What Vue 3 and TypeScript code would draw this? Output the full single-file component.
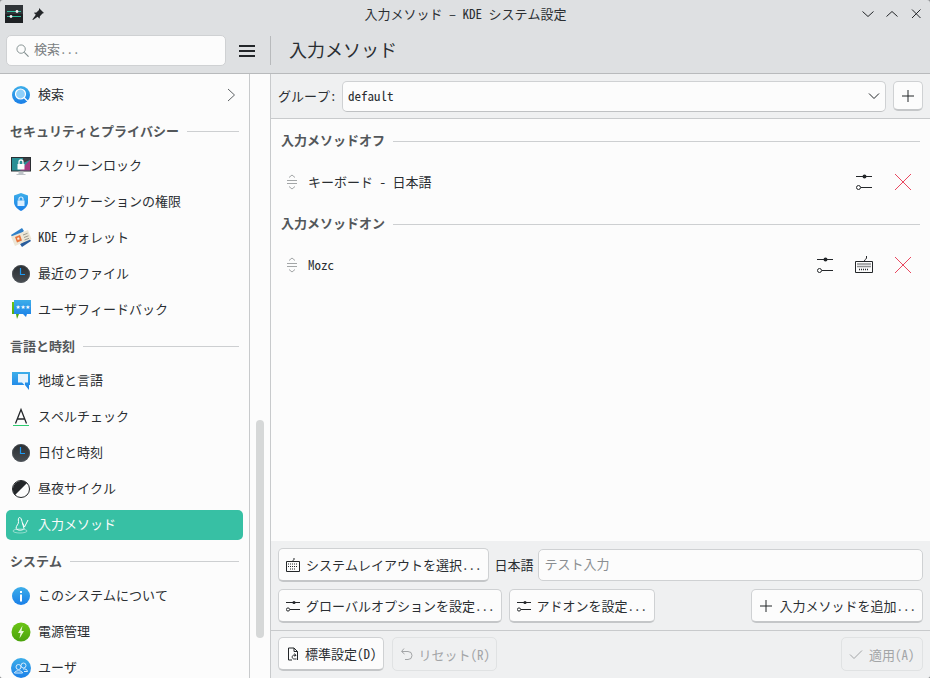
<script setup lang="ts">
interface Item {
  kind: "item" | "header";
  label: string;
  icon?: string;
  active?: boolean;
  arrow?: boolean;
}

const sidebar: Item[] = [
  { kind: "item", label: "検索", icon: "search", arrow: true },
  { kind: "header", label: "セキュリティとプライバシー" },
  { kind: "item", label: "スクリーンロック", icon: "lock" },
  { kind: "item", label: "アプリケーションの権限", icon: "shield" },
  { kind: "item", label: "KDE ウォレット", icon: "wallet" },
  { kind: "item", label: "最近のファイル", icon: "clock" },
  { kind: "item", label: "ユーザフィードバック", icon: "feedback" },
  { kind: "header", label: "言語と時刻" },
  { kind: "item", label: "地域と言語", icon: "region" },
  { kind: "item", label: "スペルチェック", icon: "spell" },
  { kind: "item", label: "日付と時刻", icon: "clock" },
  { kind: "item", label: "昼夜サイクル", icon: "night" },
  { kind: "item", label: "入力メソッド", icon: "tux", active: true },
  { kind: "header", label: "システム" },
  { kind: "item", label: "このシステムについて", icon: "info" },
  { kind: "item", label: "電源管理", icon: "power" },
  { kind: "item", label: "ユーザ", icon: "users" },
];
</script>

<template>
  <div class="window">
    <svg class="defs" width="0" height="0">
      <defs>
        <linearGradient id="blue" x1="0" y1="0" x2="0" y2="1">
          <stop offset="0" stop-color="#3daee9" />
          <stop offset="1" stop-color="#1a7fe8" />
        </linearGradient>
        <linearGradient id="green" x1="0" y1="0" x2="0" y2="1">
          <stop offset="0" stop-color="#6cc516" />
          <stop offset="1" stop-color="#4aa20c" />
        </linearGradient>
        <linearGradient id="dark" x1="0" y1="0" x2="0" y2="1">
          <stop offset="0" stop-color="#2a2e32" />
          <stop offset="1" stop-color="#484d52" />
        </linearGradient>
      </defs>
    </svg>
    <header class="titlebar">
      <div class="tb-left">
        <svg class="app-icon" width="18" height="18" viewBox="0 0 18 18">
          <rect width="18" height="18" fill="#2f3438" />
          <rect y="9" width="18" height="9" fill="#1d2023" />
          <path d="M2 6.500h14M2 11.500h14" stroke="#2fbf9f" stroke-width="1" />
          <circle cx="12" cy="6.500" r="1.400" fill="#eff0f1" />
          <circle cx="6" cy="11.500" r="1.400" fill="#eff0f1" />
        </svg>
        <svg width="14" height="14" viewBox="0 0 14 14">
          <path d="M8 1l5 5-1.500.6-2.600 2.600-.3 2.600-2-2L2 13l-.6-.6 3.400-4.600-2-2 2.600-.3 2.600-2.600z" fill="#232629" />
        </svg>
      </div>
      <div class="wintitle">入力メソッド – KDE システム設定</div>
      <div class="tb-right">
        <svg width="12" height="12" viewBox="0 0 12 12"><path d="M.500 3.500L6 8.500l5.500-5" class="win-stroke" /></svg>
        <svg width="12" height="12" viewBox="0 0 12 12"><path d="M.500 8.500L6 3.500l5.500 5" class="win-stroke" /></svg>
        <svg width="12" height="12" viewBox="0 0 12 12"><path d="M2 1.500l8.500 8.500M10.500 1.500L2 10" class="win-stroke" /></svg>
      </div>
    </header>

    <div class="toolbar">
      <div class="search-box">
        <svg width="13" height="13" viewBox="0 0 14 14">
          <circle cx="5.500" cy="5.500" r="4.500" fill="none" stroke="#7f8c8d" />
          <path d="M9 9l4.500 4.500" stroke="#7f8c8d" stroke-width="1.200" />
        </svg>
        <span class="lift2">検索...</span>
      </div>
      <svg class="burger" width="16" height="12" viewBox="0 0 16 12">
        <path d="M0 1h16M0 6h16M0 11h16" stroke="#232629" stroke-width="2" />
      </svg>
      <div class="tool-sep"></div>
      <div class="page-title lift2">入力メソッド</div>
    </div>

    <div class="main">
      <aside class="sidebar">
        <div class="side-list">
          <template v-for="it in sidebar" :key="it.label">
            <div v-if="it.kind === 'header'" class="side-header">
              <span>{{ it.label }}</span>
              <i class="rule"></i>
            </div>
            <div v-else class="side-item" :class="{ active: it.active }">
              <svg class="side-icon" width="22" height="22" viewBox="0 0 22 22">
                <template v-if="it.icon === 'search'">
                  <circle cx="11" cy="11" r="9" fill="url(#blue)" />
                  <circle cx="10.500" cy="10" r="5" fill="#8fd0fa" stroke="#fff" stroke-width="1.200" />
                  <path d="M14 13.500l4 4" stroke="#fff" stroke-width="1.300" />
                </template>
                <template v-else-if="it.icon === 'lock'">
                  <rect x="1" y="2" width="20" height="14.500" fill="#2a2e32" />
                  <path d="M2 3h18v12.500H2z" fill="#2a8f95" />
                  <path d="M20 5v10.500H10z" fill="#a9397f" />
                  <path d="M13 3h7v2l-7 3z" fill="#3a3f44" />
                  <rect x="8.500" y="16.500" width="5" height="2.500" fill="#bdc3c7" />
                  <rect x="6.500" y="19" width="9" height="1" fill="#bdc3c7" />
                  <rect x="7.500" y="9" width="7" height="5.500" fill="#fcfcfc" />
                  <path d="M9 9V7a2 2 0 0 1 4 0v2" fill="none" stroke="#fcfcfc" stroke-width="1.300" />
                </template>
                <template v-else-if="it.icon === 'shield'">
                  <path d="M11 2l7 2.500V11c0 4-3 7-7 9-4-2-7-5-7-9V4.500z" fill="url(#blue)" />
                  <rect x="7.500" y="9.500" width="7" height="5.500" fill="#dcefff" />
                  <path d="M9 9.500V8a2 2 0 0 1 4 0v1.500" fill="none" stroke="#dcefff" stroke-width="1.200" />
                </template>
                <template v-else-if="it.icon === 'wallet'">
                  <path d="M1 8l11-7 2 3-10 9z" fill="#2f80c9" />
                  <path d="M12 20l9-6-2-3-9 6z" fill="#2a5d9c" />
                  <path d="M1 9.500l17-6.500 3.500 9L5 19z" fill="#ece6d6" />
                  <path d="M5 10l5-2 2 5.500-5 2z" fill="#e8743b" />
                  <path d="M7 11l2-.7.700 2-2 .7z" fill="#f7e9d8" />
                  <path d="M13 8l4.500-1.700M14 10.500l4.500-1.700M14.500 13l4.500-1.700" stroke="#9a9a8e" />
                </template>
                <template v-else-if="it.icon === 'clock'">
                  <circle cx="11" cy="11" r="9" fill="url(#dark)" />
                  <circle cx="11" cy="11" r="8.500" fill="none" stroke="#5a6065" stroke-opacity=".6" />
                  <path d="M10.500 5v6.500H15" fill="none" stroke="#1d99f3" stroke-width="1.200" />
                </template>
                <template v-else-if="it.icon === 'feedback'">
                  <path d="M2 3h4v12h3l-2 5-1-5H2z" fill="url(#green)" />
                  <path d="M4 1h17v14h-4l-1 3-3-3H4z" fill="url(#blue)" />
                  <text x="5.500" y="10" class="stars">★★★</text>
                </template>
                <template v-else-if="it.icon === 'region'">
                  <path d="M2 2h18v13h-1v5l-4-5H2z" fill="url(#blue)" />
                  <path d="M8 4h10v8.500h-3v3l-3-3H8z" fill="#e6f3fd" />
                </template>
                <template v-else-if="it.icon === 'spell'">
                  <path d="M5.500 17.500L11 3.500l5.500 14M7.300 13h7.400" fill="none" stroke="#232629" stroke-width="1.300" />
                  <path d="M3 19.500h16" stroke="#2ecc71" stroke-width="1" />
                </template>
                <template v-else-if="it.icon === 'night'">
                  <circle cx="11" cy="11" r="8.500" fill="#fcfcfc" stroke="#232629" />
                  <path d="M5 17A8.500 8.500 0 0 1 17 5z" fill="#232629" />
                </template>
                <template v-else-if="it.icon === 'tux'">
                  <path d="M9.500 3.500c1.500 0 2 2 2.500 4l2 7c-1 2-6 2.500-8 0 0-3 3-4.500 2.500-7-.5-2 0-4 1-4z" fill="none" stroke="#fff" />
                  <path d="M12.500 9l2 4 3.500-7" fill="none" stroke="#fff" />
                  <ellipse cx="10" cy="17" rx="7" ry="2" fill="none" stroke="#fff" stroke-opacity=".45" />
                </template>
                <template v-else-if="it.icon === 'info'">
                  <circle cx="11" cy="11" r="9" fill="url(#blue)" />
                  <rect x="10" y="9.500" width="2" height="7" fill="#fff" />
                  <rect x="10" y="6" width="2" height="2" fill="#fff" />
                </template>
                <template v-else-if="it.icon === 'power'">
                  <circle cx="11" cy="11" r="9.500" fill="url(#green)" />
                  <path d="M12.500 4.500L8 12h2.500l-1 5.500L14 10h-2.500z" fill="#e8f7da" />
                </template>
                <template v-else-if="it.icon === 'users'">
                  <circle cx="11" cy="11" r="10" fill="url(#blue)" />
                  <circle cx="8.500" cy="10" r="2.500" fill="none" stroke="#d6ecfd" />
                  <circle cx="13.500" cy="8.500" r="2.500" fill="none" stroke="#d6ecfd" />
                  <path d="M4.500 16c0-3 8-3 8 0zM13 12c2-.5 4.500.5 4.500 2.500H14" fill="none" stroke="#d6ecfd" />
                </template>
              </svg>
              <span class="side-label">{{ it.label }}</span>
              <svg v-if="it.arrow" class="side-arrow" width="9" height="14" viewBox="0 0 9 14">
                <path d="M1 1l6.500 6L1 13" fill="none" stroke="#5e6265" />
              </svg>
            </div>
          </template>
        </div>
      </aside>

      <div class="scroll-col"><div class="thumb"></div></div>

      <section class="content">
        <div class="group-bar">
          <span class="group-label lift1">グループ:</span>
          <div class="combo">
            <span class="lift1">default</span>
            <svg width="12" height="8" viewBox="0 0 12 8"><path d="M1 1.500l5 5 5-5" fill="none" stroke="#232629" /></svg>
          </div>
          <button class="btn square">
            <svg width="12" height="12" viewBox="0 0 12 12"><path d="M6 0v12M0 6h12" stroke="#232629" /></svg>
          </button>
        </div>

        <div class="im-list">
          <div class="im-header"><span class="lift2">入力メソッドオフ</span><i class="rule"></i></div>
          <div class="im-row">
            <svg class="grip" width="12" height="16" viewBox="0 0 12 16"><path d="M3 3.500L6 1l3 2.500M1 6.500h10M1 9.500h10M3 12.500L6 15l3-2.500" fill="none" stroke="#8c8f91" stroke-width=".8" /></svg>
            <span class="im-name">キーボード - 日本語</span>
            <svg class="row-ic sliders" width="16" height="16" viewBox="0 0 16 16"><path d="M0 2.500h16M5 13.500h11" stroke="#232629" /><circle cx="8.500" cy="2.500" r="2" fill="#232629" /><circle cx="2.500" cy="13.500" r="2" fill="#fff" stroke="#232629" /></svg>
            <svg class="row-ic" width="18" height="18" viewBox="0 0 18 18"><path d="M1 1l16 16M17 1L1 17" stroke="#e9475f" /></svg>
          </div>
          <div class="im-header"><span class="lift2">入力メソッドオン</span><i class="rule"></i></div>
          <div class="im-row">
            <svg class="grip" width="12" height="16" viewBox="0 0 12 16"><path d="M3 3.500L6 1l3 2.500M1 6.500h10M1 9.500h10M3 12.500L6 15l3-2.500" fill="none" stroke="#8c8f91" stroke-width=".8" /></svg>
            <span class="im-name">Mozc</span>
            <svg class="row-ic sliders" width="16" height="16" viewBox="0 0 16 16"><path d="M0 2.500h16M5 13.500h11" stroke="#232629" /><circle cx="8.500" cy="2.500" r="2" fill="#232629" /><circle cx="2.500" cy="13.500" r="2" fill="#fff" stroke="#232629" /></svg>
            <svg class="row-ic" width="18" height="18" viewBox="0 0 18 18">
              <path d="M11.500 0v2c0 1.500-2 1-2 3M.5 5.500h17v11H.5z" fill="none" stroke="#232629" />
              <path d="M2.500 8h13M2.500 10.500h13M4 13.500h10" stroke="#232629" stroke-dasharray="1 1" stroke-width="1.400" />
            </svg>
            <svg class="row-ic" width="18" height="18" viewBox="0 0 18 18"><path d="M1 1l16 16M17 1L1 17" stroke="#e9475f" /></svg>
          </div>
        </div>

        <div class="lower">
          <div class="lower-row">
            <button class="btn">
              <svg width="14" height="14" viewBox="0 0 14 14">
                <path d="M8 0v1.500c0 1-1.500 .5-1.500 2M.5 3.500h13v10H.5z" fill="none" stroke="#232629" />
                <path d="M2 6h10M2 8.500h10M4 11h6" stroke="#232629" stroke-dasharray="1 1" stroke-width="1.200" />
              </svg>
              システムレイアウトを選択...
            </button>
            <span class="lang lift1">日本語</span>
            <div class="test-input"><span class="lift2">テスト入力</span></div>
          </div>
          <div class="lower-row">
            <button class="btn">
              <svg width="14" height="14" viewBox="0 0 14 14"><path d="M0 3.500h14M4 10.500h10" stroke="#232629" /><circle cx="8" cy="3.500" r="1.600" fill="#232629" /><circle cx="2" cy="10.500" r="1.600" fill="#fcfcfc" stroke="#232629" /></svg>
              グローバルオプションを設定...
            </button>
            <button class="btn addon">
              <svg width="14" height="14" viewBox="0 0 14 14"><path d="M0 3.500h14M4 10.500h10" stroke="#232629" /><circle cx="8" cy="3.500" r="1.600" fill="#232629" /><circle cx="2" cy="10.500" r="1.600" fill="#fcfcfc" stroke="#232629" /></svg>
              アドオンを設定...
            </button>
            <button class="btn push">
              <svg width="14" height="14" viewBox="-1 -1 14 14"><path d="M6 0v12M0 6h12" stroke="#232629" /></svg>
              入力メソッドを追加...
            </button>
          </div>
        </div>

        <div class="footer">
          <button class="btn tight">
            <svg width="14" height="14" viewBox="0 0 14 14"><path d="M6 13H2.500V1H8l3.500 3.500V13M8 1v3.500h3.500M10.500 12L8.500 12a2 2 0 1 1 1-3.500M8.500 6.500l1.500 2-2 .5" fill="none" stroke="#232629" /></svg>
            標準設定(D)
          </button>
          <button class="btn tight disabled">
            <svg width="14" height="14" viewBox="0 0 14 14"><path d="M4 1.500L1.500 4.500l3 2.500M2 4.500h6a4 4 0 0 1 0 8H5" fill="none" stroke="#a3a5a7" /></svg>
            リセット(R)
          </button>
          <button class="btn disabled push apply">
            <svg width="14" height="14" viewBox="0 0 14 14"><path d="M1 7.500l4 4L13 3.500" fill="none" stroke="#a3a5a7" /></svg>
            適用(A)
          </button>
        </div>
      </section>
    </div>
  </div>
</template>

<style>
html, body { margin: 0; padding: 0; background: #8a8c8e; }
</style>

<style scoped>
.window {
  width: 930px;
  height: 678px;
  display: flex;
  flex-direction: column;
  overflow: hidden;
  border-radius: 3px;
  background: #dee0e2;
  color: #2a2e32;
  font-family: "Noto Sans Mono CJK JP", "DejaVu Sans Mono", "Noto Sans CJK JP", monospace;
  font-size: 13px;
}
.defs { flex: none; }
.lift1 { padding-bottom: 2px; }
.lift2 { padding-bottom: 4px; }
.titlebar {
  height: 28px;
  flex: none;
  display: flex;
  align-items: center;
  padding: 0 8px 0 5px;
}
.tb-left { display: flex; align-items: center; gap: 8px; }
.tb-right { margin-left: auto; display: flex; gap: 12px; }
.win-stroke { fill: none; stroke: #232629; stroke-width: 1; }
.wintitle { flex: 1; text-align: center; padding: 0 0 2px 24px; }
.toolbar {
  height: 45px;
  flex: none;
  display: flex;
  align-items: center;
  padding: 0 0 0 6px;
  border-bottom: 1px solid #b8babc;
}
.search-box {
  width: 220px;
  height: 31px;
  box-sizing: border-box;
  background: #fcfcfc;
  border: 1px solid #cfd1d3;
  border-radius: 5px;
  display: flex;
  align-items: center;
  gap: 5px;
  padding-left: 9px;
  color: #7a7e81;
}
.burger { margin-left: 13px; }
.tool-sep { width: 1px; height: 29px; background: #b8babc; margin-left: 15px; }
.page-title { font-size: 18px; margin-left: 18px; }
.main { flex: 1; display: flex; min-height: 0; }
.sidebar {
  width: 249px;
  flex: none;
  background: #fcfcfc;
  border-right: 1px solid #c8cacc;
  overflow: hidden;
}
.side-list { display: flex; flex-direction: column; padding-top: 3px; }
.side-item {
  height: 30px;
  margin: 3px 6px;
  display: flex;
  align-items: center;
  gap: 6px;
  padding: 0 6px 0 4px;
  border-radius: 5px;
  flex: none;
}
.side-item.active { background: #37c0a4; color: #fcfcfc; }
.side-icon { flex: none; }
.side-label { padding-bottom: 4px; }
.side-arrow { margin-left: auto; margin-right: 1px; }
.side-header {
  height: 35px;
  flex: none;
  box-sizing: border-box;
  padding: 0 10px 1px 10px;
  display: flex;
  align-items: center;
  gap: 8px;
  font-weight: 700;
  color: #53575a;
}
.side-header .rule { margin-top: 3px; }
.rule { flex: 1; height: 1px; background: #cdcfd1; }
.stars { font-size: 5.500px; fill: #fff; font-family: "DejaVu Sans", sans-serif; }
.scroll-col {
  width: 20px;
  flex: none;
  background: #fcfcfc;
  border-right: 1px solid #c8cacc;
  position: relative;
}
.thumb {
  position: absolute;
  left: 6px;
  top: 346px;
  width: 8px;
  height: 218px;
  border-radius: 4px;
  background: #d6d8d8;
}
.content {
  flex: 1;
  min-width: 0;
  display: flex;
  flex-direction: column;
  background: #eff0f1;
}
.group-bar {
  height: 45px;
  flex: none;
  box-sizing: border-box;
  display: flex;
  align-items: center;
  padding: 0 7px;
  border-bottom: 1px solid #c8cacc;
}
.group-label { width: 64px; flex: none; }
.combo {
  flex: 1;
  height: 31px;
  box-sizing: border-box;
  background: #fcfcfc;
  border: 1px solid #cfd1d3;
  border-bottom-color: #bfc1c3;
  border-radius: 5px;
  display: flex;
  align-items: center;
  justify-content: space-between;
  padding: 0 5px 0 5px;
}
.btn {
  height: 34px;
  box-sizing: border-box;
  font: inherit;
  color: inherit;
  background: #fcfcfc;
  border: 1px solid #cfd1d3;
  border-bottom: 2px solid #c4c6c8;
  border-radius: 5px;
  display: inline-flex;
  align-items: center;
  gap: 6px;
  padding: 0 6px 0 7px;
  white-space: nowrap;
}
.btn.tight { gap: 5px; }
.btn.addon { padding-right: 7px; }
.btn.square { width: 30px; height: 30px; justify-content: center; padding: 0; margin-left: 7px; }
.btn.disabled {
  background: #eff0f1;
  color: #a3a5a7;
  border: 1px solid #e0e2e3;
}
.btn.apply { width: 82px; }
.push { margin-left: auto; }
.im-list {
  flex: 1;
  background: #fcfcfc;
  padding-top: 1px;
}
.im-header {
  height: 42px;
  box-sizing: border-box;
  display: flex;
  align-items: center;
  gap: 8px;
  padding: 0 10px;
  font-weight: 700;
  color: #53575a;
}
.im-row {
  height: 41px;
  box-sizing: border-box;
  display: flex;
  align-items: center;
  padding: 0 18px 2px 15px;
  gap: 21px;
}
.im-name { margin-left: -11px; margin-right: auto; }
.sliders { margin-right: 1px; }
.grip { flex: none; }
.lower {
  height: 90px;
  flex: none;
  box-sizing: border-box;
  padding: 7px 7px 0 7px;
  display: flex;
  flex-direction: column;
  gap: 7px;
  border-bottom: 1px solid #c8cacc;
}
.lower-row { display: flex; align-items: center; gap: 7px; }
.lang { margin-left: -1px; }
.test-input {
  flex: 1;
  height: 32px;
  box-sizing: border-box;
  background: #fcfcfc;
  border: 1px solid #cfd1d3;
  border-radius: 5px;
  display: flex;
  align-items: center;
  padding-left: 6px;
  color: #8a8e91;
  margin-left: -3px;
}
.footer {
  height: 47px;
  flex: none;
  box-sizing: border-box;
  display: flex;
  align-items: flex-start;
  gap: 8px;
  padding: 6px 7px 0;
}
</style>
